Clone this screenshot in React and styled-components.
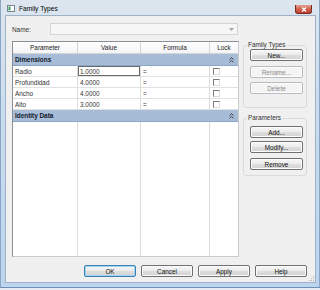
import styled, { createGlobalStyle } from "styled-components";

const GlobalStyle = createGlobalStyle`
  html, body {
    margin: 0;
    padding: 0;
    background: #e6ecf2;
  }
  body {
    font-family: "Liberation Sans", Arial, sans-serif;
    font-size: 6.4px;
    color: #1a1a1a;
  }
`;

const Window = styled.div`
  width: 320px;
  height: 288px;
  box-sizing: border-box;
  display: flex;
  flex-direction: column;
  padding: 0 3px 4px 4px;
  background: linear-gradient(#dde6ef, #c9dcef 40%, #bcd5ee);
  border-left: 1px solid #8aa6c4;
  border-right: 1px solid #8aa6c4;
  border-bottom: 1px solid #6f8fb3;
`;

const TitleBar = styled.div`
  height: 15px;
  display: flex;
  align-items: flex-start;
  padding-left: 2px;
`;

const TitleIcon = styled.svg`
  margin-top: 5px;
  width: 8px;
  height: 7px;
`;

const TitleText = styled.span`
  margin-left: 4px;
  margin-top: 5px;
  font-size: 6.6px;
  line-height: 8px;
  color: #000;
`;

const CloseButton = styled.div`
  margin-left: auto;
  margin-right: 4px;
  margin-top: 5px;
  width: 17px;
  height: 9px;
  box-sizing: border-box;
  border: 1px solid #7b2a20;
  border-top: none;
  border-radius: 0 0 3px 3px;
  background: linear-gradient(#e7a293, #d0604c 50%, #c0402c);
  display: flex;
  align-items: center;
  justify-content: center;
`;

const Client = styled.div`
  flex: 1;
  position: relative;
  display: flex;
  flex-direction: column;
  background: #f0f0f0;
  border: 1px solid #9fb1c4;
  padding: 7px 8px 5px 6px;
`;

const NameRow = styled.div`
  display: flex;
  align-items: center;
  height: 12px;
`;

const Label = styled.span`
  width: 38px;
  color: #333;
`;

const ComboBox = styled.div`
  width: 188px;
  height: 12px;
  box-sizing: border-box;
  border: 1px solid #d4d4d4;
  background: #f6f6f6;
  display: flex;
  align-items: center;
  justify-content: flex-end;
  padding-right: 3px;
`;

const MainRow = styled.div`
  margin-top: 6px;
  display: flex;
  gap: 4px;
  height: 216px;
`;

const Table = styled.div`
  width: 227px;
  box-sizing: border-box;
  border: 1px solid #8a8f96;
  border-right-color: #c8ccd0;
  border-bottom-color: #c8ccd0;
  background: #fff;
  display: flex;
  flex-direction: column;
`;

const Row = styled.div`
  display: flex;
  height: ${(p) => p.$h}px;
  flex: ${(p) => (p.$fill ? 1 : "none")};
  border-bottom: ${(p) => (p.$fill ? "none" : `1px solid ${p.$line || "#e1e1e1"}`)};
  background: ${(p) => p.$bg || "#fff"};
`;

const Cell = styled.div`
  width: ${(p) => p.$w}px;
  flex: ${(p) => (p.$w ? "none" : 1)};
  box-sizing: border-box;
  border-right: ${(p) => (p.$last ? "none" : `1px solid ${p.$line || "#dcdcdc"}`)};
  display: flex;
  align-items: center;
  justify-content: ${(p) => (p.$center ? "center" : "flex-start")};
  padding-left: ${(p) => (p.$center ? 0 : 2)}px;
  color: #333;
  box-shadow: ${(p) => (p.$editing ? "inset 0 0 0 1px #6a6a6a" : "none")};
  white-space: nowrap;
`;

const HeaderCell = styled(Cell)`
  color: #222;
  background: linear-gradient(#ffffff, #f3f4f6);
`;

const Band = styled.div`
  height: 11px;
  flex: none;
  display: flex;
  align-items: center;
  justify-content: space-between;
  padding: 0 4px 0 2px;
  background: #a7bcd7;
  border-bottom: 1px solid #8ea6c6;
  font-weight: bold;
  color: #101828;
`;

const Check = styled.span`
  width: 7px;
  height: 7px;
  box-sizing: border-box;
  margin-left: 1px;
  background: #fff;
  border-top: 1px solid #7a7a7a;
  border-left: 1px solid #7a7a7a;
  border-right: 1px solid #dcdcdc;
  border-bottom: 1px solid #dcdcdc;
`;

const Side = styled.div`
  width: 64px;
  display: flex;
  flex-direction: column;
`;

const Group = styled.fieldset`
  margin: ${(p) => p.$mt || 0}px 0 0 0;
  padding: 0 3px ${(p) => p.$pb}px 6px;
  border: 1px solid #d5dde3;
  border-radius: 3px;
  display: flex;
  flex-direction: column;
  min-width: 0;
`;

const Legend = styled.legend`
  margin-left: -3px;
  padding: 0 1px;
  font-size: 6.4px;
  line-height: 8px;
  color: #333;
`;

const Button = styled.div`
  width: ${(p) => p.$w || 53}px;
  height: 12px;
  margin-top: ${(p) => p.$mt || 0}px;
  box-sizing: border-box;
  border: 1px solid ${(p) => (p.$default ? "#3c7fb1" : p.$disabled ? "#b8bcc0" : "#707070")};
  border-radius: 2px;
  background: ${(p) =>
    p.$disabled
      ? "#f4f4f4"
      : "linear-gradient(#f6f6f6, #ececec 45%, #dedede 50%, #d3d3d3)"};
  box-shadow: ${(p) => (p.$default ? "inset 0 0 0 1px #9fd5f5" : "inset 0 0 0 1px #fcfcfc")};
  color: ${(p) => (p.$disabled ? "#8d8d8d" : "#111")};
  display: flex;
  align-items: center;
  justify-content: center;
`;

const Footer = styled.div`
  margin-top: 8px;
  display: flex;
  justify-content: flex-end;
  gap: 5px;
`;

const Grip = styled.svg`
  position: absolute;
  right: 1px;
  bottom: 1px;
  width: 5px;
  height: 5px;
`;

const Chevrons = () => (
  <svg width="5" height="6" viewBox="0 0 5 6">
    <path d="M0.5 2.5 L2.5 0.8 L4.5 2.5 M0.5 5.2 L2.5 3.5 L4.5 5.2" fill="none" stroke="#333" strokeWidth="0.9" />
  </svg>
);

const cols = [65, 63, 69];

const params = [
  { name: "Radio", value: "1.0000", editing: true },
  { name: "Profundidad", value: "4.0000" },
  { name: "Ancho", value: "4.0000" },
  { name: "Alto", value: "3.0000" },
];

export default function App() {
  return (
    <>
      <GlobalStyle />
      <Window>
        <TitleBar>
          <TitleIcon viewBox="0 0 8 7">
            <rect x="0.5" y="0.5" width="7" height="6" fill="#fff" stroke="#7d8791" />
            <rect x="1.5" y="1.5" width="2" height="4" fill="#3a9a5a" />
          </TitleIcon>
          <TitleText>Family Types</TitleText>
          <CloseButton>
            <svg width="6" height="5" viewBox="0 0 6 5">
              <path d="M1 0.5 L5 4.5 M5 0.5 L1 4.5" stroke="#fff" strokeWidth="1.3" />
            </svg>
          </CloseButton>
        </TitleBar>
        <Client>
          <NameRow>
            <Label>Name:</Label>
            <ComboBox>
              <svg width="5" height="3" viewBox="0 0 5 3">
                <path d="M0 0 L5 0 L2.5 3 Z" fill="#a8a8a8" />
              </svg>
            </ComboBox>
          </NameRow>
          <MainRow>
            <Table>
              <Row $h={11} $line="#d5d5d5">
                <HeaderCell $w={cols[0]} $center $line="#d5d5d5">Parameter</HeaderCell>
                <HeaderCell $w={cols[1]} $center $line="#d5d5d5">Value</HeaderCell>
                <HeaderCell $w={cols[2]} $center $line="#d5d5d5">Formula</HeaderCell>
                <HeaderCell $center $last>Lock</HeaderCell>
              </Row>
              <Band>
                <span>Dimensions</span>
                <Chevrons />
              </Band>
              {params.map((p) => (
                <Row key={p.name} $h={10}>
                  <Cell $w={cols[0]}>{p.name}</Cell>
                  <Cell $w={cols[1]} $editing={p.editing}>{p.value}</Cell>
                  <Cell $w={cols[2]}>=</Cell>
                  <Cell $last>
                    <Check />
                  </Cell>
                </Row>
              ))}
              <Band>
                <span>Identity Data</span>
                <Chevrons />
              </Band>
              <Row $fill>
                <Cell $w={cols[0]} />
                <Cell $w={cols[1]} />
                <Cell $w={cols[2]} />
                <Cell $last />
              </Row>
            </Table>
            <Side>
              <Group $pb={13}>
                <Legend>Family Types</Legend>
                <Button>New...</Button>
                <Button $mt={5} $disabled>Rename...</Button>
                <Button $mt={4} $disabled>Delete</Button>
              </Group>
              <Group $mt={6} $pb={5}>
                <Legend>Parameters</Legend>
                <Button $mt={4}>Add...</Button>
                <Button $mt={3}>Modify...</Button>
                <Button $mt={5}>Remove</Button>
              </Group>
            </Side>
          </MainRow>
          <Footer>
            <Button $w={52} $default>OK</Button>
            <Button $w={52}>Cancel</Button>
            <Button $w={52}>Apply</Button>
            <Button $w={52}>Help</Button>
          </Footer>
          <Grip viewBox="0 0 5 5">
            <rect x="4" y="0" width="1" height="1" fill="#b0b0b0" />
            <rect x="2" y="2" width="1" height="1" fill="#b0b0b0" />
            <rect x="4" y="2" width="1" height="1" fill="#b0b0b0" />
            <rect x="0" y="4" width="1" height="1" fill="#b0b0b0" />
            <rect x="2" y="4" width="1" height="1" fill="#b0b0b0" />
            <rect x="4" y="4" width="1" height="1" fill="#b0b0b0" />
          </Grip>
        </Client>
      </Window>
    </>
  );
}
